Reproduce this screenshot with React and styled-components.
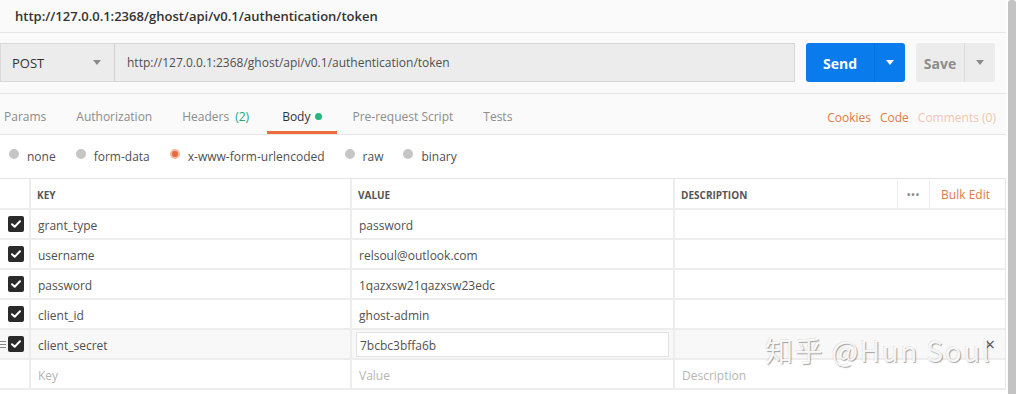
import React from 'react';
import styled, { createGlobalStyle } from 'styled-components';

const GlobalStyle = createGlobalStyle`
  html, body {
    margin: 0;
    padding: 0;
    background: #fff;
  }
  body {
    font-family: "Open Sans", "Liberation Sans", sans-serif;
    color: #505050;
  }
`;

const URL = 'http://127.0.0.1:2368/ghost/api/v0.1/authentication/token';

const rows = [
  { key: 'grant_type', value: 'password' },
  { key: 'username', value: 'relsoul@outlook.com' },
  { key: 'password', value: '1qazxsw21qazxsw23edc' },
  { key: 'client_id', value: 'ghost-admin' },
  { key: 'client_secret', value: '7bcbc3bffa6b', hover: true },
];

const tabs = [
  { label: 'Params' },
  { label: 'Authorization' },
  { label: 'Headers', count: '(2)' },
  { label: 'Body', active: true, dot: true },
  { label: 'Pre-request Script' },
  { label: 'Tests' },
];

const modes = [
  { label: 'none' },
  { label: 'form-data' },
  { label: 'x-www-form-urlencoded', checked: true },
  { label: 'raw' },
  { label: 'binary' },
];

const Caret = ({ color = '#8a8a8a' }) => (
  <svg width="8" height="5" viewBox="0 0 8 5">
    <path d="M0 0h8L4 5z" fill={color} />
  </svg>
);

const Check = () => (
  <svg width="10" height="8" viewBox="0 0 10 8">
    <path d="M1 4.2l2.7 2.6L9 1.3" stroke="#fff" strokeWidth="2" fill="none" strokeLinecap="round" strokeLinejoin="round" />
  </svg>
);

const DragIcon = () => (
  <svg width="6" height="7" viewBox="0 0 6 7">
    <path d="M0 0.5h6M0 3.5h6M0 6.5h6" stroke="#8a8a8a" strokeWidth="1" />
  </svg>
);

const App = () => (
  <>
    <GlobalStyle />
    <Frame>
      <Main>
        <TitleBar>{URL}</TitleBar>
        <RequestBar>
          <Method>
            POST
            <Caret />
          </Method>
          <UrlField>{URL}</UrlField>
          <SplitButton primary>
            <ButtonLabel primary>Send</ButtonLabel>
            <ButtonCaret primary>
              <Caret color="#fff" />
            </ButtonCaret>
          </SplitButton>
          <SplitButton>
            <ButtonLabel>Save</ButtonLabel>
            <ButtonCaret>
              <Caret />
            </ButtonCaret>
          </SplitButton>
        </RequestBar>
        <TabBar>
          <TabList>
            {tabs.map((t) => (
              <Tab key={t.label} active={t.active}>
                {t.label}
                {t.count && <Count>{t.count}</Count>}
                {t.dot && <GreenDot />}
              </Tab>
            ))}
          </TabList>
          <TabLinks>
            <TabLink>Cookies</TabLink>
            <TabLink>Code</TabLink>
            <TabLink faded>Comments (0)</TabLink>
          </TabLinks>
        </TabBar>
        <ModeRow>
          {modes.map((m) => (
            <Mode key={m.label}>
              <Radio checked={m.checked} />
              {m.label}
            </Mode>
          ))}
        </ModeRow>
        <Table>
          <HeaderRow>
            <Cell />
            <HeadCell>Key</HeadCell>
            <HeadCell>Value</HeadCell>
            <HeadCell>
              Description
              <HeadActions>
                <Dots>•••</Dots>
                <BulkEdit>Bulk Edit</BulkEdit>
              </HeadActions>
            </HeadCell>
          </HeaderRow>
          {rows.map((r) => (
            <Row key={r.key} hover={r.hover}>
              <CheckCell>
                {r.hover && (
                  <Handle>
                    <DragIcon />
                  </Handle>
                )}
                <CheckBox>
                  <Check />
                </CheckBox>
              </CheckCell>
              <TextCell>{r.key}</TextCell>
              <TextCell>
                {r.hover ? <EditBox>{r.value}</EditBox> : r.value}
              </TextCell>
              <TextCell>{r.hover && <Remove>×</Remove>}</TextCell>
            </Row>
          ))}
          <Row>
            <Cell />
            <TextCell placeholder>Key</TextCell>
            <TextCell placeholder>Value</TextCell>
            <TextCell placeholder>Description</TextCell>
          </Row>
        </Table>
        <Watermark>知乎 @Hun Soul</Watermark>
      </Main>
      <Scrollbar />
    </Frame>
  </>
);

export default App;

const Frame = styled.div`
  display: flex;
  width: 1016px;
  height: 394px;
  overflow: hidden;
  background: #fff;
`;

const Main = styled.div`
  position: relative;
  flex: 1;
  display: flex;
  flex-direction: column;
  min-width: 0;
`;

const Scrollbar = styled.div`
  width: 8px;
  margin-left: 2px;
  background: #c3c3c3;
  border-radius: 3px 3px 0 0;
`;

const TitleBar = styled.div`
  height: 32px;
  line-height: 33px;
  padding-left: 15px;
  background: #fafafa;
  border-bottom: 1px solid #e6e6e6;
  font-size: 13px;
  font-weight: 600;
  color: #333;
`;

const RequestBar = styled.div`
  display: flex;
  align-items: stretch;
  gap: 11px;
  height: 39px;
  padding: 10px 11px 11px 0;
  background: #fafafa;
  border-bottom: 1px solid #e6e6e6;
`;

const Method = styled.div`
  display: flex;
  align-items: center;
  justify-content: space-between;
  width: 115px;
  padding: 0 13px 0 11px;
  box-sizing: border-box;
  margin-right: -11px;
  background: #ececec;
  border: 1px solid #d9d9d9;
  border-right: 1px solid #d2d2d2;
  font-size: 13px;
  color: #333;
`;

const UrlField = styled.div`
  flex: 1;
  display: flex;
  align-items: center;
  padding-left: 12px;
  background: #ececec;
  border: 1px solid #d6d6d6;
  border-left: none;
  font-size: 12px;
  color: #505050;
`;

const SplitButton = styled.div`
  display: flex;
  width: ${(p) => (p.primary ? 99 : 79)}px;
  background: ${(p) => (p.primary ? '#097bed' : '#ececec')};
  border-radius: 3px;
`;

const ButtonLabel = styled.div`
  flex: 1;
  display: flex;
  align-items: center;
  justify-content: center;
  padding-top: 1px;
  font-size: 14px;
  font-weight: 700;
  color: ${(p) => (p.primary ? '#fff' : '#8c8c8c')};
`;

const ButtonCaret = styled.div`
  display: flex;
  align-items: center;
  justify-content: center;
  width: 30px;
  border-left: 1px solid ${(p) => (p.primary ? '#0a6fd6' : '#dcdcdc')};
`;

const TabBar = styled.div`
  display: flex;
  align-items: stretch;
  justify-content: space-between;
  height: 40px;
  background: #fafafa;
  border-bottom: 1px solid #e6e6e6;
`;

const TabList = styled.div`
  display: flex;
  margin-left: -11px;
`;

const Tab = styled.div`
  display: flex;
  align-items: center;
  gap: 5px;
  padding: 7px 15px 0;
  border-bottom: 3px solid ${(p) => (p.active ? '#ee6b3b' : 'transparent')};
  font-size: 12px;
  color: ${(p) => (p.active ? '#333' : '#8c8c8c')};
`;

const Count = styled.span`
  margin: 0 3px 0 1px;
  color: #26a57a;
`;

const GreenDot = styled.span`
  width: 7px;
  height: 7px;
  border-radius: 50%;
  background: #26b47f;
`;

const TabLinks = styled.div`
  display: flex;
  align-items: center;
  gap: 9px;
  padding: 6px 10px 0 0;
`;

const TabLink = styled.span`
  font-size: 12px;
  color: ${(p) => (p.faded ? '#f0c7b0' : '#de7a47')};
`;

const ModeRow = styled.div`
  display: flex;
  align-items: center;
  gap: 20px;
  height: 43px;
  padding: 0 0 0 9px;
  border-bottom: 1px solid #e4e4e4;
`;

const Mode = styled.div`
  display: flex;
  align-items: center;
  gap: 8px;
  font-size: 12px;
  color: #505050;
`;

const Radio = styled.span`
  width: 10px;
  height: 10px;
  margin-top: -5px;
  border-radius: 50%;
  box-sizing: border-box;
  background: ${(p) => (p.checked ? '#e8693a' : '#c6c6c6')};
  border: ${(p) => (p.checked ? '2px solid #f1b9a0' : 'none')};
`;

const Table = styled.div`
  display: flex;
  flex-direction: column;
  width: 1005px;
  border-right: 1px solid #e8e8e8;
`;

const Row = styled.div`
  display: grid;
  grid-template-columns: 31px 321px 323px 1fr;
  height: 30px;
  box-sizing: border-box;
  border-bottom: 2px solid #ededed;
  background: ${(p) => (p.hover ? '#f8f8f8' : '#fff')};
`;

const HeaderRow = styled(Row)`
  height: 31px;
`;

const Cell = styled.div`
  position: relative;
  display: flex;
  align-items: center;
  min-width: 0;
  padding-top: 2px;
  border-right: 2px solid #ededed;
`;

const HeadCell = styled(Cell)`
  padding-left: 6px;
  font-size: 10px;
  font-weight: 700;
  text-transform: uppercase;
  color: #555;
  &:last-child {
    border-right: none;
  }
`;

const HeadActions = styled.div`
  display: flex;
  align-items: stretch;
  height: 100%;
  margin-left: auto;
`;

const Dots = styled.span`
  display: flex;
  align-items: center;
  padding: 0 9px;
  border-left: 1px solid #ececec;
  border-right: 1px solid #ececec;
  font-size: 9px;
  letter-spacing: 1px;
  color: #8a8a8a;
`;

const BulkEdit = styled.span`
  display: flex;
  align-items: center;
  padding: 0 15px 0 11px;
  font-size: 12px;
  font-weight: 400;
  text-transform: none;
  color: #de7a47;
`;

const CheckCell = styled(Cell)`
  justify-content: center;
  padding-top: 0;
`;

const CheckBox = styled.span`
  display: flex;
  align-items: center;
  justify-content: center;
  width: 16px;
  height: 16px;
  margin-left: 2px;
  border-radius: 2px;
  background: #2a2a2a;
`;

const Handle = styled.span`
  position: absolute;
  left: 0;
  top: 11px;
  display: flex;
`;

const TextCell = styled(Cell)`
  padding-left: 7px;
  padding-right: 4px;
  font-size: 12px;
  color: ${(p) => (p.placeholder ? '#b5b5b5' : '#505050')};
  &:last-child {
    border-right: none;
  }
`;

const EditBox = styled.div`
  display: flex;
  align-items: center;
  flex: 1;
  height: 25px;
  margin: -2px 0 0 -3px;
  padding: 2px 0 0 3px;
  box-sizing: border-box;
  background: #fff;
  border: 1px solid #e2e2e2;
`;

const Remove = styled.span`
  position: absolute;
  right: 10px;
  top: 2px;
  font-size: 18px;
  color: #555;
`;

const Watermark = styled.div`
  position: absolute;
  left: 765px;
  top: 330px;
  font-family: "Noto Sans CJK SC", "Liberation Sans", sans-serif;
  font-size: 28px;
  letter-spacing: 1.5px;
  color: rgba(255, 255, 255, 0.9);
  text-shadow: 1px 1px 1px rgba(0, 0, 0, 0.35), -1px -1px 0 rgba(0, 0, 0, 0.08);
  pointer-events: none;
  white-space: nowrap;
`;
